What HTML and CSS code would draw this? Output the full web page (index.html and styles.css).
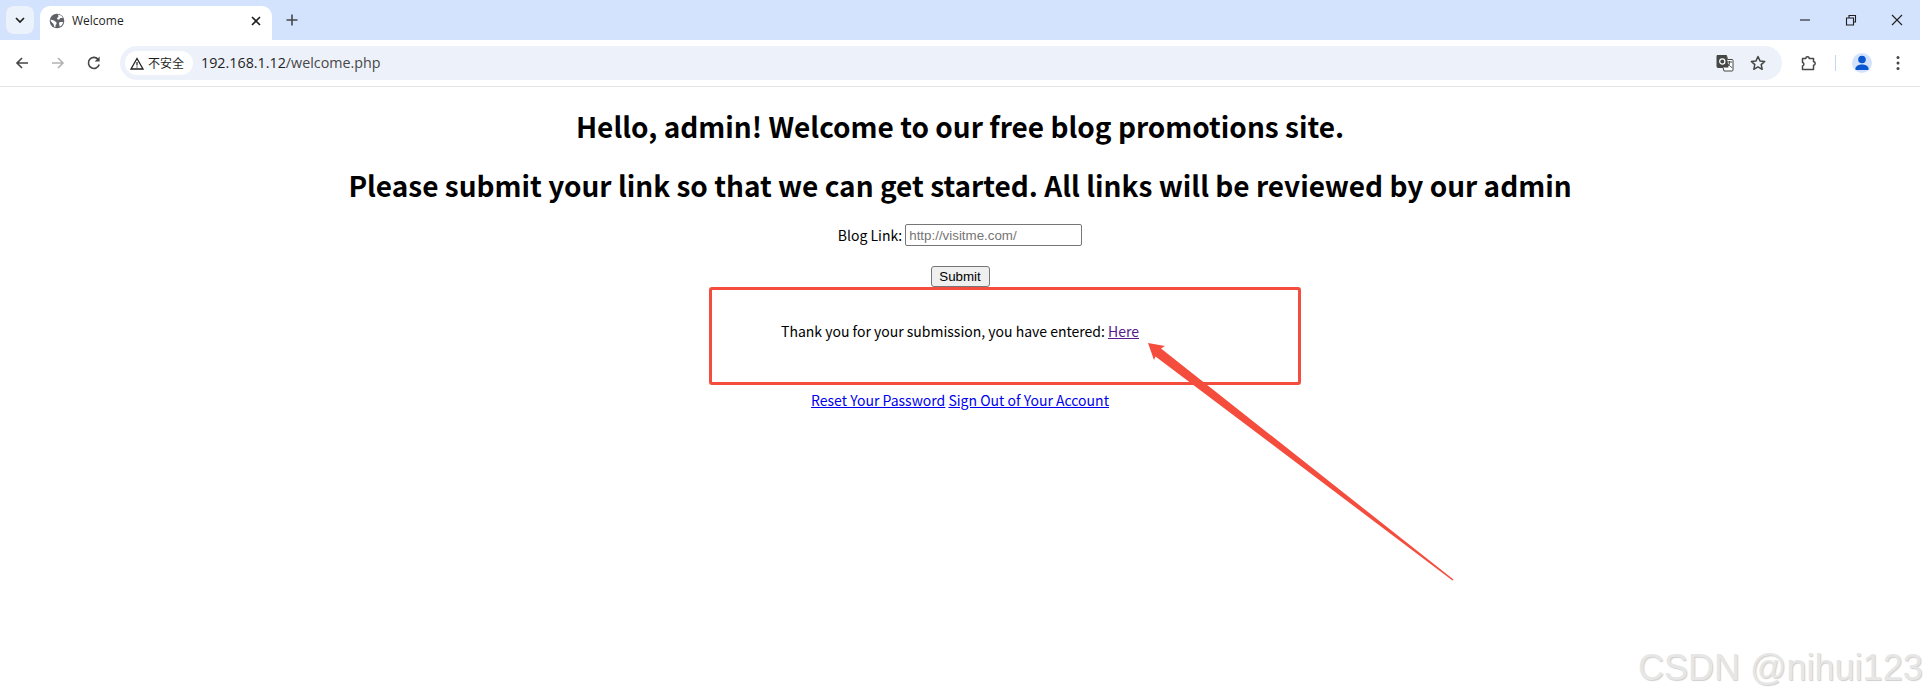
FILE: index.html
```html
<!DOCTYPE html>
<html lang="en">
<head>
<meta charset="utf-8">
<title>Welcome</title>
<link rel="stylesheet" href="styles.css">
</head>
<body>
<div class="window">
  <header class="chrome">
    <div class="tabstrip">
      <button class="tabsearch" aria-label="Tab search">
        <svg width="12" height="12" viewBox="0 0 12 12"><path d="M2 4l4 4 4-4" fill="none" stroke="#1f1f1f" stroke-width="1.7"/></svg>
      </button>
      <div class="tab">
        <svg class="favicon" width="16" height="16" viewBox="0 0 16 16"><circle cx="8" cy="8" r="7.300" fill="#5f6368"/><path d="M1.500 6.500l3.500 1 2.500 2v1.500l-1 1v2l-1 .3-1-3.300-2.500-2.500zM9 1.500l3.500 1.200 1.300 2.300h-2.800l-.5 1.500h-2l-.5-1.500 1.500-1.200zM10.500 9h3.800l-1.300 3-2.200 1.700-.8-3z" fill="#fff"/></svg>
        <span class="tabtitle">Welcome</span>
        <svg class="tabclose" width="12" height="12" viewBox="0 0 12 12"><path d="M2 2l8 8M10 2l-8 8" stroke="#1f1f1f" stroke-width="1.6"/></svg>
      </div>
      <svg class="newtab" width="14" height="14" viewBox="0 0 14 14"><path d="M7 1.500v11M1.500 7h11" stroke="#444746" stroke-width="1.6"/></svg>
      <div class="wincontrols">
        <svg width="14" height="14" viewBox="0 0 14 14"><path d="M2 7h10" stroke="#1f1f1f" stroke-width="1.1"/></svg>
        <svg width="14" height="14" viewBox="0 0 14 14"><path d="M2.500 5h7v7h-7zM5 5V2.500h6.500V9H9.500" fill="none" stroke="#1f1f1f" stroke-width="1.1"/></svg>
        <svg width="14" height="14" viewBox="0 0 14 14"><path d="M2 2l10 10M12 2L2 12" stroke="#1f1f1f" stroke-width="1.1"/></svg>
      </div>
    </div>
    <div class="toolbar">
      <svg class="navicon" width="16" height="16" viewBox="0 0 16 16"><path d="M14 8H3M8 3L3 8l5 5" fill="none" stroke="#444746" stroke-width="1.6"/></svg>
      <svg class="navicon" width="16" height="16" viewBox="0 0 16 16"><path d="M2 8h11M8 3l5 5-5 5" fill="none" stroke="#b0b2b4" stroke-width="1.6"/></svg>
      <svg class="navicon" width="16" height="16" viewBox="0 0 16 16"><path d="M13.200 9.500A5.500 5.500 0 1 1 12 4.200" fill="none" stroke="#444746" stroke-width="1.6"/><path d="M13.600 1.500v5h-5z" fill="#444746"/></svg>
      <div class="omnibox">
        <div class="chip">
          <svg width="14" height="13" viewBox="0 0 14 13"><path d="M7 1.500L13 12H1z" fill="none" stroke="#1f1f1f" stroke-width="1.300"/><path d="M7 5v3.600M7 9.400v1.200" stroke="#1f1f1f" stroke-width="1.200"/></svg>
          <span class="chiptext">不安全</span>
        </div>
        <span class="url">192.168.1.12<span class="urlpath">/welcome.php</span></span>
        <div class="omniactions">
          <svg width="18" height="18" viewBox="0 0 18 18"><path d="M1 1.500h9.500l1 4H16a1 1 0 0 1 1 1V16a1 1 0 0 1-1 1H8l-1-3.500H2a1 1 0 0 1-1-1z" fill="#fff" stroke="#444746" stroke-width="1"/><path d="M1 1.500h9.500l2 12H2a1 1 0 0 1-1-1z" fill="#444746"/><circle cx="6.300" cy="7.500" r="2.600" fill="none" stroke="#fff" stroke-width="1.200"/><path d="M11 8h5M13.500 7v1.500c0 2-1 3.500-2.500 4.500M12 9.500c.8 1.500 2 3 4 4" fill="none" stroke="#444746" stroke-width="1"/></svg>
          <svg width="16" height="16" viewBox="0 0 16 16"><path d="M8 1.500l2 4.400 4.700.5-3.500 3.200 1 4.700L8 11.900l-4.200 2.400 1-4.700L1.300 6.400 6 5.900z" fill="none" stroke="#444746" stroke-width="1.500" stroke-linejoin="round"/></svg>
        </div>
      </div>
      <div class="tools">
        <svg width="16" height="16" viewBox="0 0 16 16"><path d="M1.500 3.500h3.300a1.700 1.700 0 0 1 3.400 0h4.300v3.300a1.700 1.700 0 0 1 0 3.400v4.300H1.500v-3.500a1.800 1.800 0 0 0 0-3.500z" fill="none" stroke="#444746" stroke-width="1.500" stroke-linejoin="round"/></svg>
        <span class="divider"></span>
        <span class="avatar"><svg width="20" height="20" viewBox="0 0 20 20"><circle cx="10" cy="6.500" r="3.800" fill="#0b57d0"/><path d="M3.500 17v-1.500c0-2.500 3.500-4 6.500-4s6.500 1.500 6.500 4V17z" fill="#0b57d0"/></svg></span>
        <svg width="16" height="16" viewBox="0 0 16 16"><circle cx="8" cy="2.500" r="1.500" fill="#444746"/><circle cx="8" cy="8" r="1.500" fill="#444746"/><circle cx="8" cy="13.500" r="1.500" fill="#444746"/></svg>
      </div>
    </div>
  </header>
  <main class="page">
    <h1>Hello, admin! Welcome to our free blog promotions site.</h1>
    <h1>Please submit your link so that we can get started. All links will be reviewed by our admin</h1>
    <form class="linkform">
      <div class="field"><label for="blog">Blog Link:</label> <input id="blog" type="text" placeholder="http://visitme.com/"></div>
      <div class="actions"><input type="submit" value="Submit"></div>
    </form>
    <p class="thanks">Thank you for your submission, you have entered: <a class="visited" href="#here">Here</a></p>
    <p class="links"><a href="#reset">Reset Your Password</a> <a href="#signout">Sign Out of Your Account</a></p>
  </main>
</div>
<div class="redbox"></div>
<svg class="arrow" width="1925" height="698" viewBox="0 0 1925 698"><polygon points="1148,343 1165,346 1161,348.500 1453.500,579.500 1452.500,580.500 1155.500,356.500 1154,360" fill="#f44c3d"/></svg>
<div class="watermark">CSDN @nihui123</div>
</body>
</html>
```
FILE: styles.css
```css
html, body { margin: 0; padding: 0; background: #fff; }
body { height: 698px; overflow: hidden; position: relative; font-family: "Noto Sans CJK SC", "Noto Sans", sans-serif; }
.window { width: 1920px; }
svg { display: block; flex: none; }

.tabstrip { height: 40px; background: #d3e3fd; display: flex; align-items: flex-start; position: relative; }
.tabsearch { width: 28px; height: 28px; margin: 6px 6px 0 6px; padding: 0; border: 0; border-radius: 8px; background: #ecf2fc; display: flex; align-items: center; justify-content: center; }
.tab { width: 232px; height: 34px; margin-top: 6px; background: #fff; border-radius: 10px 10px 0 0; display: flex; align-items: center; padding: 0 10px 4px 9px; box-sizing: border-box; }
.favicon { margin: 0 7px 0 0; }
.tabtitle { flex: 1; font: 12px/16px "Open Sans", "Noto Sans", sans-serif; color: #1f1f1f; }
.newtab { margin: 13px 0 0 13px; }
.wincontrols { margin: 13px 16px 0 auto; display: flex; gap: 32px; }

.toolbar { height: 46px; border-bottom: 1px solid #e3e3e3; background: #fff; display: flex; align-items: center; padding-left: 14px; border-radius: 8px 8px 0 0; }
.navicon { margin-right: 20px; }
.omnibox { width: 1662px; height: 34px; margin-left: -2px; background: #edf2fa; border-radius: 17px; display: flex; align-items: center; padding: 0 16px 0 5px; box-sizing: border-box; }
.chip { width: 68px; height: 24px; background: #fff; border-radius: 12px; display: flex; align-items: center; gap: 4px; padding-left: 5px; box-sizing: border-box; }
.chiptext { font: 12px/16px "Noto Sans CJK SC", sans-serif; color: #1f1f1f; }
.url { margin-left: 8px; font: 14.3px/20px "Open Sans", "Noto Sans", sans-serif; color: #1f1f1f; }
.urlpath { color: #474747; }
.omniactions { margin-left: auto; display: flex; align-items: center; gap: 16px; }
.tools { margin-left: 19px; display: flex; align-items: center; }
.divider { width: 1px; height: 16px; background: #c4d7f5; margin: 0 16px 0 18px; }
.avatar { width: 20px; height: 20px; border-radius: 50%; background: #d3e3fd; margin-right: 18px; overflow: hidden; }

.page { text-align: center; color: #000; font-size: 14px; line-height: 20px; }
h1 { font-size: 28px; line-height: 42px; font-weight: 700; margin: 0; }
h1:first-child { padding-top: 18px; }
h1 + h1 { margin-top: 17px; }
.linkform { margin-top: 18px; }
.field { display: flex; justify-content: center; align-items: center; gap: 3px; }
.field input { width: 177px; height: 22px; box-sizing: border-box; padding: 1px 3px; font: 13.333px "Liberation Sans", sans-serif; border: 1px solid #767676; border-radius: 2px; margin: 0; }
.actions { margin-top: 20px; display: flex; justify-content: center; }
.actions input { width: 59px; height: 21px; padding: 0; font: 13.333px "Liberation Sans", sans-serif; border: 1px solid #767676; border-radius: 3px; background: #efefef; margin: 0; }
.thanks { margin: 34px 0 0; }
.links { margin: 49px 0 0; }
a { color: #0000ee; }
a.visited { color: #551a8b; }

.redbox { position: absolute; left: 709px; top: 287px; width: 592px; height: 98px; box-sizing: border-box; border: 3px solid #f44c3d; border-radius: 3px; }
.arrow { position: absolute; left: 0; top: 0; pointer-events: none; }
.watermark { position: absolute; left: 1638px; top: 646px; font: 36px/44px "Liberation Sans", sans-serif; color: #e6e6e6; text-shadow: 1px 1px 1px #cfcfcf; white-space: nowrap; }
```
